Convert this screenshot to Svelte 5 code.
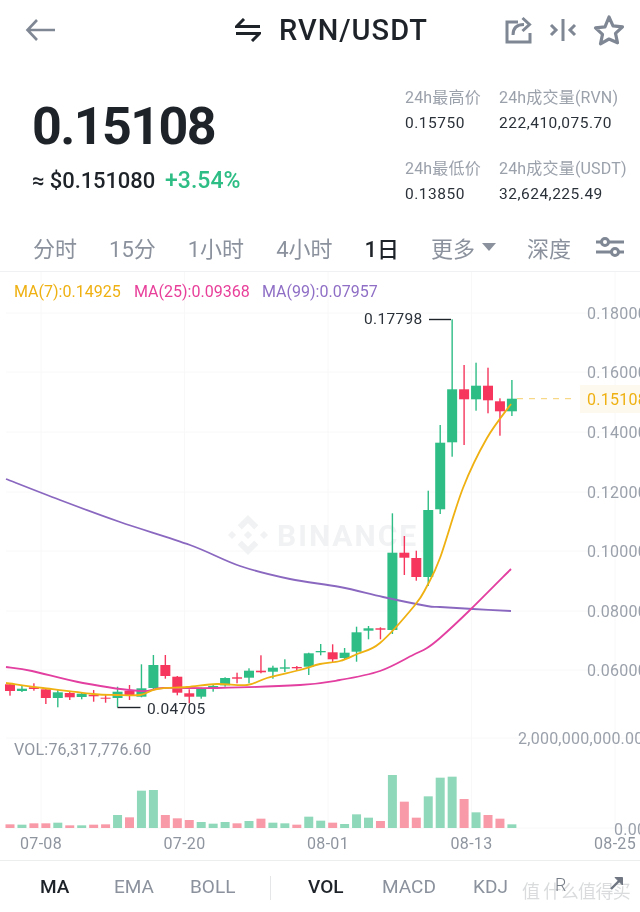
<script>
  const X0 = 10, STEP = 11.95, BASE = 828;
  // [wickTop, wickBottom, bodyTop, bodyBottom, up, volTopY]
  const raw = [
    [683.3,695.7,684.3,691,0,283],[686,692,688.7,691,1,284],[683.3,690.7,687.3,689,0,280],[688.3,704,689.3,698,0,280],
    [690,707.3,692.3,698,1,278],[691.7,700,693,697.3,0,286],[692.7,699.3,693.7,697,1,286],[690,701.7,694.7,696.3,0,284],
    [695,702.7,697.7,698.7,0,283],[686.7,707.3,691.7,698,1,255],[685,700,690.7,695.3,0,262],[664.3,697.3,688.3,696.7,1,182],
    [655,689.3,665,688,1,180],[655,678.7,665,676,0,255],[676,695.3,676.7,692.7,0,265],[689.3,703.3,693.3,696.7,0,270],
    [687.7,698.7,688.3,696.7,1,276],[685,691.7,686,688,1,281],[677.3,686.7,678,685.3,1,276],[672.7,683.3,677.3,678.7,0,280],
    [668.3,683.3,670.7,677.7,1,273],[655.3,673.3,670.7,672.3,0,266],[665.7,678.7,667.7,671.7,1,278],[659.3,672,667.3,668.7,1,280],
    [666,670,667,668.3,0,284],[652.7,675,653.3,666.7,1,260],[644,655.3,651,652.3,1,272],[644.3,662,652.3,659.3,0,278],
    [648,660,652.7,658,1,282],[626.7,661.7,632.3,651.7,1,253],[626,639.3,628.3,630.7,1,263],[627.3,639.3,628.3,629.7,0,273],
    [513.3,634,552.7,630,1,135],[536,575,552.7,557.7,0,215],[550.7,580.7,558,577,0,263],[490.7,586,510,577,1,199],
    [425,514,442.7,509.3,1,143],[319.3,456.7,389.3,442.3,1,140],[365,445,389.3,399.3,0,207],[362.7,410.7,385.7,399.3,1,247],
    [367.7,413.3,385.7,400.3,0,255],[398.3,435.7,401.3,411.3,0,266],[380,416,398.7,411.3,1,283]
  ];
  const candles = raw.map((r, i) => ({
    x: X0 + i * STEP, wt: r[0], wb: r[1], bt: r[2], bb: r[3], up: !!r[4], vt: 730 + r[5] / 3
  }));

  function smooth(pts) {
    let d = `M${pts[0][0]} ${pts[0][1]}`;
    for (let i = 0; i < pts.length - 1; i++) {
      const p0 = pts[Math.max(i - 1, 0)], p1 = pts[i], p2 = pts[i + 1], p3 = pts[Math.min(i + 2, pts.length - 1)];
      const c1x = p1[0] + (p2[0] - p0[0]) / 6, c1y = p1[1] + (p2[1] - p0[1]) / 6;
      const c2x = p2[0] - (p3[0] - p1[0]) / 6, c2y = p2[1] - (p3[1] - p1[1]) / 6;
      d += `C${c1x.toFixed(1)} ${c1y.toFixed(1)} ${c2x.toFixed(1)} ${c2y.toFixed(1)} ${p2[0]} ${p2[1]}`;
    }
    return d;
  }
  const yellow = smooth([[6,683],[43,688],[93,694],[117,695],[140,695],[157,689],[187,687],[217,684],[247,685],[267,678],[300,670],[320,664],[340,661],[357,654],[380,643],[415,605],[427,586],[440,558],[463,488],[487,438],[511,404]]);
  const pink = smooth([[6,667],[32,671],[83,683],[140,691],[163,688],[217,688],[300,685],[340,680],[380,671],[413,655],[427,648],[440,638],[470,610],[511,569]]);
  const purple = smooth([[6,479],[60,500],[120,522],[190,545],[240,566],[290,579],[340,587],[383,597],[427,606],[440,607],[473,609],[511,611]]);

  const prices = [["0.18000",313],["0.16000",372],["0.14000",432],["0.12000",492],["0.10000",551],["0.08000",611],["0.06000",670]];
  const gridY = [313,372,432,492,551,611,670,738,828];
  const dates = [["07-08",41],["07-20",184.5],["08-01",328],["08-13",471.5],["08-25",615]];
  const tabs = [["分时",0],["15分",0],["1小时",0],["4小时",0],["1日",1]];
</script>

<div class="page">
  <header class="top">
    <svg class="back" viewBox="0 0 32 24" width="32" height="24"><path d="M30 12H3M12 2 2.500 12 12 22" /></svg>
    <div class="title">
      <svg class="swap" viewBox="0 0 26 24" width="26" height="24"><path d="M25 8.500H1.500L9 1M1 15.500h23.500L17 23" /></svg>
      <span>RVN/USDT</span>
    </div>
    <div class="actions">
      <svg viewBox="0 0 28 28" width="28" height="28"><path d="M13 6H2v20h23v-9M8 19c0-7 4-10.500 11-10.500M17.500 2l7 6.500-7 6.500" /></svg>
      <svg viewBox="0 0 28 28" width="28" height="28"><path d="M14 3v22M2 9l5 5-5 5M26 9l-5 5 5 5" /></svg>
      <svg class="star" viewBox="0 0 32 32" width="32" height="32"><path d="M16 3l4 8.800 9.500 1-7 6.500 2 9.500L16 25l-8.500 4.800 2-9.500-7-6.500 9.500-1z" /></svg>
    </div>
  </header>

  <section class="summary">
    <div class="price">
      <div class="last">0.15108</div>
      <div class="sub"><span class="fiat">≈ $0.151080</span><span class="chg">+3.54%</span></div>
    </div>
    <div class="stats">
      <div><p class="lab">24h最高价</p><p class="val">0.15750</p></div>
      <div><p class="lab">24h成交量(RVN)</p><p class="val">222,410,075.70</p></div>
      <div><p class="lab">24h最低价</p><p class="val">0.13850</p></div>
      <div><p class="lab">24h成交量(USDT)</p><p class="val">32,624,225.49</p></div>
    </div>
  </section>

  <nav class="tabs">
    {#each tabs as t}<span class:on={t[1]}>{t[0]}</span>{/each}
    <span class="more">更多<i class="caret"></i></span>
    <span class="depth">深度</span>
    <svg class="sliders" viewBox="0 0 28 20" width="28" height="20">
      <path d="M0 5h28M0 15h28" />
      <circle cx="9" cy="5" r="3.500" /><circle cx="19" cy="15" r="3.500" />
    </svg>
  </nav>

  <svg class="chart" viewBox="0 272 640 588" width="640" height="588">
    {#each gridY as y}<line class="grid" x1="6" x2="640" y1={y} y2={y} />{/each}
    {#each dates as d}<line class="grid" x1={d[1]} x2={d[1]} y1="272" y2="828" />{/each}

    <g class="mark">
      <g transform="translate(248 535)">
        <path d="M0-20 10.300-9.700 6.200-5.600 0-11.800-6.200-5.600-10.300-9.700z" />
        <path d="M0 20 10.300 9.700 6.200 5.600 0 11.800-6.200 5.600-10.300 9.700z" />
        <path d="M-16-4.100-11.900 0-16 4.100-20 0z" />
        <path d="M16-4.100 20 0 16 4.100 11.900 0z" />
        <path d="M0-4.100 4.100 0 0 4.100-4.100 0z" />
      </g>
      <text x="277" y="546">BINANCE</text>
    </g>

    <text class="legend" x="14" y="297" fill="#efb112">MA(7):0.14925</text>
    <text class="legend" x="134" y="297" fill="#e8409a">MA(25):0.09368</text>
    <text class="legend" x="262" y="297" fill="#8f6fc6">MA(99):0.07957</text>

    {#each candles as c}
      <g fill={c.up ? "#2ebd85" : "#f6365c"}>
        <rect x={c.x - 0.7} y={c.wt} width="1.400" height={c.wb - c.wt} />
        <rect x={c.x - 5} y={c.bt} width="10" height={c.bb - c.bt} />
      </g>
      <rect x={c.x - 4.500} y={c.vt} width="9" height={BASE - c.vt} fill={c.up ? "#8fd9ba" : "#f99aa9"} />
    {/each}

    <path class="ma" d={purple} stroke="#8a68c0" />
    <path class="ma" d={pink} stroke="#e23fa0" />
    <path class="ma" d={yellow} stroke="#efb112" />

    <path class="tick" d="M429 319.500h22" />
    <text class="note" x="364" y="324">0.17798</text>
    <path class="tick" d="M117.500 707.500h23" />
    <text class="note" x="147" y="714">0.04705</text>

    {#each prices as p}<text class="axis" x="587" y={p[1] + 6}>{p[0]}</text>{/each}
    <rect x="580" y="385" width="60" height="28" fill="#fdf9ee" />
    <line class="dash" x1="517" x2="576" y1="398.700" y2="398.700" />
    <text class="axis cur" x="587" y="405">0.15108</text>

    <text class="axis" x="518" y="744">2,000,000,000.00</text>
    <text class="axis" x="614" y="835">0.00</text>
    <text class="vol" x="14" y="755">VOL:76,317,776.60</text>
    {#each dates as d}<text class="date" x={d[1]} y="849">{d[0]}</text>{/each}
  </svg>

  <footer class="bottom">
    <span class="a" style="left:40px">MA</span>
    <span style="left:114px">EMA</span>
    <span style="left:190px">BOLL</span>
    <i class="div"></i>
    <span class="a" style="left:308px">VOL</span>
    <span style="left:382px">MACD</span>
    <span style="left:473px">KDJ</span>
    <div class="wm">值 什么值得买</div>
    <span class="r" style="left:555px">R</span>
    <svg class="expand" viewBox="0 0 14 14" width="14" height="14"><path d="M1 13 10 4" /><path class="head" d="M5 1.500h7.500V9z" /></svg>
  </footer>
</div>

<style>
  :global(body) { margin: 0; background: #fff; }
  .page {
    width: 640px; height: 912px; overflow: hidden; background: #fff;
    font-family: Roboto, "Noto Sans CJK SC", sans-serif; color: #1e2329;
    filter: blur(0.45px);
  }
  p { margin: 0; }

  .top { height: 60px; display: flex; align-items: center; padding: 0 15px 0 25px; position: relative; box-sizing: border-box; }
  .top svg path { fill: none; stroke-linejoin: miter; }
  .back path { stroke: #7f8794; stroke-width: 2.600; }
  .title { position: absolute; left: 235px; top: 0; height: 60px; display: flex; align-items: center; gap: 18px; font-size: 29px; font-weight: 500; letter-spacing: 1px; }
  .swap path { stroke: #1e2329; stroke-width: 3; }
  .actions { margin-left: auto; display: flex; align-items: center; gap: 16px; }
  .actions path { stroke: #7f8794; stroke-width: 3; }
  .actions .star path { stroke-width: 3.200; stroke-linejoin: round; }

  .summary { height: 169px; display: flex; justify-content: space-between; position: relative; }
  .price { padding: 31px 0 0 32px; }
  .last { font-size: 52px; line-height: 72px; font-weight: 700; letter-spacing: -1.600px; }
  .sub { display: flex; gap: 10px; font-size: 22px; line-height: 36px; font-weight: 500; }
  .fiat { letter-spacing: -0.1px; }
  .chg { color: #2ebd85; font-size: 23px; }
  .stats { display: grid; grid-template-columns: 94px 135px; row-gap: 21px; margin: 27px 6px 0 0; align-content: start; }
  .lab { font-size: 16px; line-height: 22px; color: #9ba1ab; white-space: nowrap; letter-spacing: 0.18px; }
  .val { font-size: 15.500px; line-height: 28px; color: #2b3139; white-space: nowrap; letter-spacing: 0.5px; }

  .tabs { height: 43px; box-sizing: border-box; padding: 0 0 7px 33px; display: flex; align-items: center; font-size: 22px; color: #8b929d; border-bottom: 1px solid #f0f1f2; white-space: nowrap; gap: 32px; }
  .tabs .on { color: #1e2329; font-weight: 500; }
  .more { display: inline-flex; align-items: center; gap: 7px; }
  .caret { width: 0; height: 0; border: 7px solid transparent; border-top: 8px solid #8b929d; border-bottom: 0; }
  .depth { margin-left: -1px; }
  .sliders { margin-left: -7px; }
  .sliders path { stroke: #7f8794; stroke-width: 3; fill: none; }
  .sliders circle { fill: #fff; stroke: #7f8794; stroke-width: 3; }

  .chart { display: block; }
  .grid { stroke: #f8f8f9; stroke-width: 1; }
  .mark { fill: #f1f2f3; }
  .mark text { font-size: 30px; font-weight: 700; letter-spacing: 2px; }
  .chart text { font-family: Roboto, sans-serif; }
  .legend { font-size: 16px; }
  .ma { fill: none; stroke-width: 1.800; stroke-linejoin: round; }
  .tick { stroke: #1e2329; stroke-width: 1.400; fill: none; }
  .note { font-size: 15.500px; fill: #2b3139; letter-spacing: 0.3px; }
  .axis { font-size: 16px; fill: #9ba1ab; letter-spacing: 0.25px; }
  .axis.cur { fill: #efb112; }
  .dash { stroke: #f6cf6c; stroke-width: 1; stroke-dasharray: 6 6; }
  .vol { font-size: 16px; fill: #8f959f; letter-spacing: 0.2px; }
  .date { font-size: 16px; fill: #8f959f; text-anchor: middle; letter-spacing: 0.3px; }

  .bottom { height: 52px; position: relative; border-top: 1px solid #eceded; box-sizing: border-box; font-size: 19px; color: #8b929d; }
  .bottom span { position: absolute; top: 15px; line-height: 22px; }
  .bottom .a { color: #1e2329; font-weight: 500; }
  .bottom .r { font-size: 18px; top: 13px; color: #777d87; font-weight: 300; }
  .div { position: absolute; left: 270px; top: 15px; width: 1px; height: 24px; background: #e4e6e8; }
  .expand { position: absolute; left: 610px; top: 15px; }
  .expand path { stroke: #6f7682; stroke-width: 2.400; fill: none; }
  .expand .head { fill: #6f7682; stroke-width: 1; }
  .wm { position: absolute; left: 522px; top: 19px; font-size: 18px; line-height: 24px; color: rgba(130, 135, 140, 0.3); white-space: nowrap; letter-spacing: -0.6px; }
</style>
